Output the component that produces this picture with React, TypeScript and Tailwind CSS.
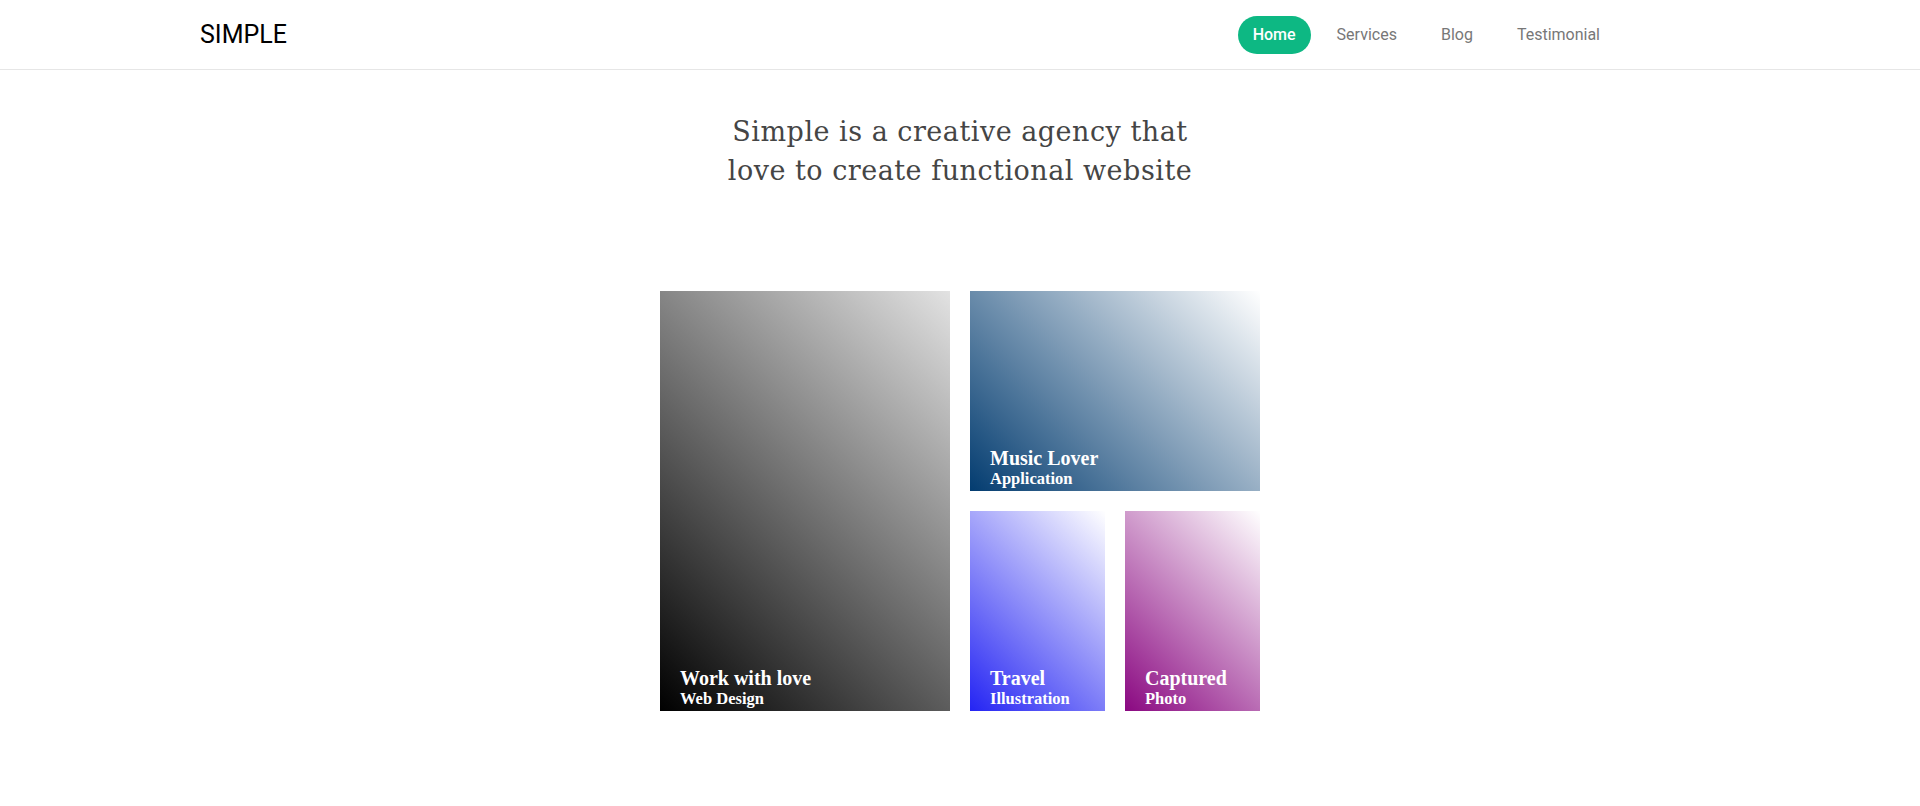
const navItems = ['Home', 'Services', 'Blog', 'Testimonial'];

type Work = { title: string; sub: string; bg: string; className: string };

const works: Work[] = [
  {
    title: 'Work with love',
    sub: 'Web Design',
    bg: 'bg-[linear-gradient(45deg,#000000,#e2e2e2)]',
    className: 'row-span-2 col-span-2',
  },
  {
    title: 'Music Lover',
    sub: 'Application',
    bg: 'bg-[linear-gradient(45deg,#033c70,#ffffff)]',
    className: 'col-span-2',
  },
  {
    title: 'Travel',
    sub: 'Illustration',
    bg: 'bg-[linear-gradient(45deg,#2424f3,#ffffff)]',
    className: '',
  },
  {
    title: 'Captured',
    sub: 'Photo',
    bg: 'bg-[linear-gradient(45deg,#8a0881,#ffffff)]',
    className: '',
  },
];

function WorkCard({ work }: { work: Work }) {
  return (
    <div className={`flex flex-col justify-end px-5 pb-[2px] font-['Liberation_Serif',serif] ${work.bg} ${work.className}`}>
      <h3 className="text-[20px] leading-[21px] font-bold text-white">{work.title}</h3>
      <p className="text-[16.5px] leading-[20px] font-bold text-white">{work.sub}</p>
    </div>
  );
}

export default function App() {
  return (
    <div className="min-h-[806px] bg-white">
      <header className="flex h-[70px] items-center justify-between border-b border-[#e6e6e6] pl-[200px] pr-[302px] font-['Roboto',sans-serif]">
        <div className="text-[25px] leading-none text-black">SIMPLE</div>
        <nav className="flex items-center gap-[8px]">
          {navItems.map((item, i) => (
            <a
              key={item}
              href="#"
              className={
                i === 0
                  ? 'flex h-[38px] items-center rounded-full bg-[#0db883] px-[15px] text-[16px] font-medium text-white'
                  : 'flex h-[38px] items-center rounded-full px-[18px] text-[16px] text-[#777]'
              }
            >
              {item}
            </a>
          ))}
        </nav>
      </header>

      <main className="font-['DejaVu_Serif',serif]">
        <h1 className="mt-[42px] text-center text-[27px] leading-[39px] tracking-[0.5px] text-[#454545]">
          Simple is a creative agency that
          <br />
          love to create functional website
        </h1>

        <section className="mx-auto mt-[101px] grid w-[600px] grid-cols-4 grid-rows-[200px_200px] gap-5">
          {works.map((w) => (
            <WorkCard key={w.title} work={w} />
          ))}
        </section>
      </main>
    </div>
  );
}
